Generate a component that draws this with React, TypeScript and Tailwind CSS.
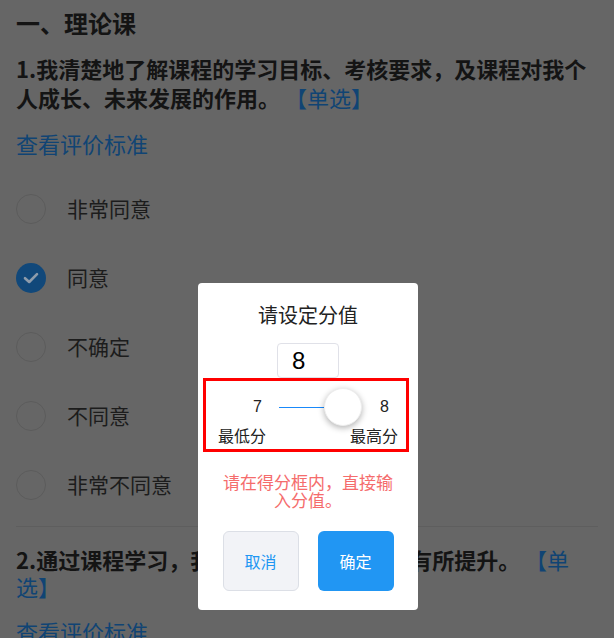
import React from "react";

const FONT = { fontFamily: '"Noto Sans CJK SC", "Noto Sans", sans-serif' };

function Radio({ checked }: { checked?: boolean }) {
  if (checked) {
    return (
      <div className="w-[30px] h-[30px] rounded-full bg-[#11487a] flex items-center justify-center shrink-0">
        <svg width="16" height="12" viewBox="0 0 16 12" fill="none">
          <path d="M2 6.2 L6.2 10 L14 2.2" stroke="#8e9cab" strokeWidth="2.6" strokeLinecap="round" strokeLinejoin="round" />
        </svg>
      </div>
    );
  }
  return <div className="w-[30px] h-[30px] rounded-full border-[1.5px] border-[#5c5c5c] shrink-0" />;
}

const options = ["非常同意", "同意", "不确定", "不同意", "非常不同意"];

export default function App() {
  return (
    <div className="relative w-[614px] h-[638px] overflow-hidden bg-[#666666]" style={FONT}>
      <div className="px-4 pt-[7px]">
        <div className="text-[24px] leading-[32px] font-bold text-[#141414]">一、理论课</div>
        <div className="mt-[15px] text-[22px] leading-[29px] font-bold text-[#141414]">
          1.我清楚地了解课程的学习目标、考核要求，及课程对我个人成长、未来发展的作用。
          <span className="font-normal text-[#104474]"> 【单选】</span>
        </div>
        <div className="mt-[16px] text-[22px] leading-[30px] text-[#104474]">查看评价标准</div>
        <div className="mt-[16px] flex flex-col">
          {options.map((o, i) => (
            <div key={o} className="h-[69px] flex items-center gap-[21px]">
              <Radio checked={i === 1} />
              <span className="text-[21px] text-[#1c1c1c]">{o}</span>
            </div>
          ))}
        </div>
        <div className="mt-[7px] h-px bg-[#5e5e5e]" />
        <div className="mt-[19px] text-[22px] leading-[27px] font-bold text-[#141414]">
          2.通过课程学习，我的专业实践应用能力有所提升。
          <span className="font-normal text-[#104474]"> 【单选】</span>
        </div>
        <div className="mt-[16px] text-[22px] leading-[30px] text-[#104474]">查看评价标准</div>
      </div>

      <div className="absolute left-[198px] top-[283px] w-[220px] h-[327px] bg-white rounded-[4px] flex flex-col items-center pt-[18px]">
        <div className="text-[20px] leading-[28px] text-[#222]">请设定分值</div>
        <div className="mt-[14px] w-[62px] h-[35px] border border-[#e0e1e8] rounded-[4px] flex items-center pl-[14px] text-[24px] text-black" style={{ fontFamily: '"Liberation Sans", Arial, sans-serif' }}>
          8
        </div>
        <div className="self-start ml-[5px] w-[206px] h-[74px] border-[3px] border-[#ff0000] flex flex-col">
          <div className="mt-[7px] h-[38px] flex items-center pl-[47px] text-[16px] text-[#222]" style={{ fontFamily: '"Liberation Sans", Arial, sans-serif' }}>
            <span className="w-[9px]">7</span>
            <div className="ml-[17px] w-[45px] h-px bg-[#1989fa]" />
            <div className="w-[38px] h-[38px] rounded-full bg-white border border-[#eeeeee] shadow-[0_2px_6px_rgba(0,0,0,0.3)]" />
            <span className="ml-[18px]">8</span>
          </div>
          <div className="flex justify-between pl-[12px] pr-[8px] text-[16px] leading-[18px] text-[#222]">
            <span>最低分</span>
            <span>最高分</span>
          </div>
        </div>
        <div className="mt-[21px] w-[172px] text-center text-[17px] leading-[18px] text-[#f56c6c]">
          请在得分框内，直接输入分值。
        </div>
        <div className="mt-[22px] flex gap-[19px]">
          <button className="w-[76px] h-[60px] rounded-[6px] bg-[#f2f3f7] border border-[#dcdfe6] text-[16px] text-[#2196f3]">取消</button>
          <button className="w-[76px] h-[60px] rounded-[6px] bg-[#2196f3] text-[16px] text-white">确定</button>
        </div>
      </div>
    </div>
  );
}
